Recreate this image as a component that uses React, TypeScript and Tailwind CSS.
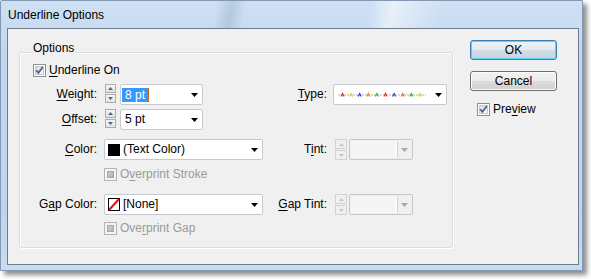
import React from "react";

function U({ children }: { children: React.ReactNode }) {
  return <span className="underline decoration-1 underline-offset-[2px]">{children}</span>;
}

function Check({ checked, disabled }: { checked?: boolean; disabled?: boolean }) {
  if (disabled) {
    return (
      <div className="w-[13px] h-[13px] shrink-0 border border-[#b4b4b4] bg-[#f4f4f4] p-[2px]">
        <div className="w-full h-full border border-[#a8a8a8] bg-[linear-gradient(135deg,#cdcdcd,#b2b2b2)]" />
      </div>
    );
  }
  return (
    <div className="relative w-[13px] h-[13px] shrink-0 border border-[#8e8f8f] bg-white p-[1px]">
      <div className="w-full h-full border border-[#c8c8c8] bg-[linear-gradient(135deg,#d9d9d9,#fafafa)]" />
      {checked && (
        <svg className="absolute left-[1px] top-[1px]" width="9" height="9" viewBox="0 0 9 9">
          <path d="M1.2 4.2 L3.4 6.8 L7.8 1" stroke="#4a5f97" strokeWidth="1.7" fill="none" />
        </svg>
      )}
    </div>
  );
}

function Spin({ disabled, tall }: { disabled?: boolean; tall?: boolean }) {
  const half = disabled
    ? "flex-1 flex items-center justify-center border border-[#d2d2d2] bg-[#f0f0f0]"
    : "flex-1 flex items-center justify-center border border-[#a9adb2] bg-[linear-gradient(#f6f6f6,#e2e2e2)]";
  const c = disabled ? "#c6c6c6" : "#4f6590";
  return (
    <div className={tall ? "w-[12px] h-[21px] flex flex-col gap-[1px]" : "w-[11px] h-[19px] flex flex-col gap-[1px]"}>
      <div className={half}>
        <svg width="5" height="3" viewBox="0 0 5 3">
          <path d="M0 3 L2.5 0 L5 3Z" fill={c} />
        </svg>
      </div>
      <div className={half}>
        <svg width="5" height="3" viewBox="0 0 5 3">
          <path d="M0 0 L5 0 L2.5 3Z" fill={c} />
        </svg>
      </div>
    </div>
  );
}

function Arrow({ gray }: { gray?: boolean }) {
  return (
    <svg width="7" height="4" viewBox="0 0 7 4" className="shrink-0">
      <path d="M0 0 L7 0 L3.5 4Z" fill={gray ? "#a8a8a8" : "#000"} />
    </svg>
  );
}

function DisabledCombo() {
  return (
    <div className="w-[64px] h-[21px] border border-[#c4c6c8] rounded-[2px] bg-[#f0f0f0] flex items-center p-[1px]">
      <div className="w-[46px] h-full bg-[#f5f5f5] border-r-2 border-[#fbfbfb] shadow-[1px_0_0_#d6d6d6]" />
      <div className="flex-1 flex justify-center">
        <Arrow gray />
      </div>
    </div>
  );
}

function TypeLine() {
  const colors = ["#e02020", "#e8d020", "#2040e0", "#f08020", "#30c030", "#e02020", "#3040d0", "#f07020", "#30b030", "#e0d020"];
  return (
    <svg width="88" height="6" viewBox="0 0 88 6">
      <line x1="0" y1="3" x2="88" y2="3" stroke="#b0b0b0" strokeWidth="1" strokeDasharray="2 1" />
      {colors.map((c, i) => (
        <path key={i} d={`M${3 + i * 8.6} 4.5 L${4.5 + i * 8.6} 1.5 L${6 + i * 8.6} 4.5`} stroke={c} strokeWidth="1.2" fill="none" />
      ))}
    </svg>
  );
}

export default function App() {
  return (
    <div className="w-[591px] h-[279px] bg-white font-['Liberation_Sans',Arial,sans-serif] text-[12px] text-black">
      <div className="w-[583px] h-[271px] border border-[#8399b3] rounded-tl-[2px] shadow-[4px_4px_5px_rgba(0,0,0,0.45)] bg-[linear-gradient(180deg,#cfe0f3_0%,#c1d7ef_20%,#bfd5ee_80%,#c8dcf1_100%)] flex flex-col">
        <div className="h-[27px] pl-[7px] pt-[7px] leading-[15px] bg-[linear-gradient(100deg,transparent_37%,rgba(120,145,175,0.28)_39.5%,transparent_42%,transparent_63%,rgba(255,255,255,0.55)_67%,rgba(255,255,255,0.2)_72%,transparent_76%)]">
          Underline Options
        </div>
        <div className="ml-[6px] w-[572px] h-[237px] border border-[#6f7c8b] bg-[#f0f0f0] flex items-start">
          {/* Group box */}
          <div className="relative ml-[11px] mt-[23px] w-[434px] h-[196px] border border-[#d5dfe5] rounded-[3px] shadow-[inset_1px_1px_0_#fff,1px_1px_0_#fff] pt-[11px]">
            <div className="absolute left-[11px] top-[-12px] px-[2px] bg-[#f0f0f0] leading-[15px]">Options</div>

            {/* Underline On */}
            <div className="h-[13px] ml-[13px] flex items-center gap-[3px]">
              <Check checked />
              <span className="leading-[15px]">
                <U>U</U>nderline On
              </span>
            </div>

            {/* Weight */}
            <div className="mt-[7px] h-[21px] flex items-start leading-[21px]">
              <div className="w-[77px] text-right">
                <U>W</U>eight:
              </div>
              <div className="ml-[8px]">
                <Spin />
              </div>
              <div className="ml-[4px] w-[83px] h-[21px] border border-[#c6c9cd] rounded-[2px] bg-white flex items-center pl-[1px] pr-[4px]">
                <span className="leading-[14px] bg-[#3399ff] text-white pl-[3px] pr-[4px] relative">
                  8 pt
                  <span className="absolute right-0 top-0 w-[1px] h-[14px] bg-[#c8661c]" />
                </span>
                <div className="flex-1" />
                <Arrow />
              </div>
              <div className="w-[124px] text-right">
                <U>T</U>ype:
              </div>
              <div className="ml-[6px] w-[114px] h-[21px] border border-[#c6c9cd] rounded-[2px] bg-white flex items-center pl-[4px] pr-[4px]">
                <TypeLine />
                <div className="flex-1" />
                <Arrow />
              </div>
            </div>

            {/* Offset */}
            <div className="mt-[4px] h-[21px] flex items-start leading-[21px]">
              <div className="w-[77px] text-right">
                <U>O</U>ffset:
              </div>
              <div className="ml-[8px]">
                <Spin />
              </div>
              <div className="ml-[4px] w-[83px] h-[21px] border border-[#c6c9cd] rounded-[2px] bg-white flex items-center pl-[4px] pr-[4px]">
                <span>5 pt</span>
                <div className="flex-1" />
                <Arrow />
              </div>
            </div>

            {/* Color */}
            <div className="mt-[9px] h-[21px] flex items-start leading-[21px]">
              <div className="w-[77px] text-right">
                <U>C</U>olor:
              </div>
              <div className="ml-[7px] w-[159px] h-[21px] border border-[#c6c9cd] rounded-[2px] bg-white flex items-center pl-[3px] pr-[4px]">
                <div className="w-[12px] h-[12px] bg-black shrink-0" />
                <span className="ml-[3px]">(Text Color)</span>
                <div className="flex-1" />
                <Arrow />
              </div>
              <div className="w-[64px] text-right">
                T<U>i</U>nt:
              </div>
              <div className="ml-[8px]">
                <Spin disabled tall />
              </div>
              <div className="ml-[2px]">
                <DisabledCombo />
              </div>
            </div>

            {/* Overprint Stroke */}
            <div className="mt-[8px] h-[13px] ml-[84px] flex items-center gap-[3px] text-[#9a9a9a]">
              <Check disabled />
              <span className="leading-[15px]">
                O<U>v</U>erprint Stroke
              </span>
            </div>

            {/* Gap Color */}
            <div className="mt-[13px] h-[21px] flex items-start leading-[21px]">
              <div className="w-[77px] text-right">
                G<U>a</U>p Color:
              </div>
              <div className="ml-[7px] w-[159px] h-[21px] border border-[#c6c9cd] rounded-[2px] bg-white flex items-center pl-[3px] pr-[4px]">
                <svg width="12" height="13" viewBox="0 0 12 13" className="shrink-0">
                  <rect x="0.5" y="0.5" width="11" height="12" fill="#fff" stroke="#000" />
                  <line x1="1" y1="12" x2="11" y2="1" stroke="#e01010" strokeWidth="2" />
                </svg>
                <span className="ml-[3px]">[None]</span>
                <div className="flex-1" />
                <Arrow />
              </div>
              <div className="w-[64px] text-right">
                <U>G</U>ap Tint:
              </div>
              <div className="ml-[8px]">
                <Spin disabled tall />
              </div>
              <div className="ml-[2px]">
                <DisabledCombo />
              </div>
            </div>

            {/* Overprint Gap */}
            <div className="mt-[7px] h-[13px] ml-[84px] flex items-center gap-[3px] text-[#9a9a9a]">
              <Check disabled />
              <span className="leading-[15px]">
                Ove<U>r</U>print Gap
              </span>
            </div>
          </div>

          {/* Buttons */}
          <div className="ml-[17px] mt-[11px] w-[87px] flex flex-col">
            <div className="h-[20px] rounded-[3px] border border-[#3c7fb1] shadow-[inset_0_0_0_1px_#5fd0f2] bg-[linear-gradient(180deg,#eef4f8_0%,#e3ebf1_50%,#d3dde6_51%,#c9d4de_100%)] flex items-center justify-center leading-[15px]">
              OK
            </div>
            <div className="mt-[11px] h-[20px] rounded-[3px] border border-[#707070] shadow-[inset_0_0_0_1px_#fcfcfc] bg-[linear-gradient(180deg,#f2f2f2_0%,#ebebeb_50%,#dddddd_51%,#cfcfcf_100%)] flex items-center justify-center leading-[15px]">
              Cancel
            </div>
            <div className="mt-[12px] ml-[7px] h-[13px] flex items-center gap-[3px]">
              <Check checked />
              <span className="leading-[15px]">
                Pre<U>v</U>iew
              </span>
            </div>
          </div>
        </div>
      </div>
    </div>
  );
}
